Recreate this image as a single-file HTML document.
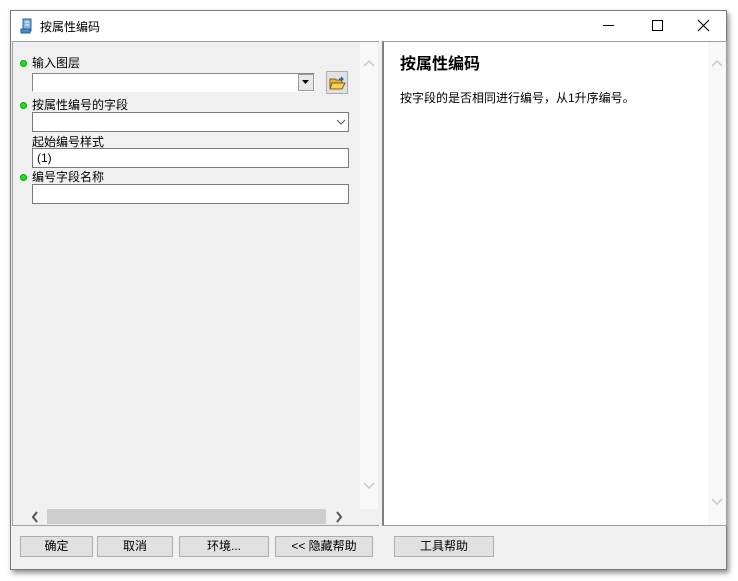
<!DOCTYPE html>
<html><head><meta charset="utf-8"><style>
*{box-sizing:border-box;margin:0;padding:0}
body{width:738px;height:581px;background:#fff;position:relative;overflow:hidden;font-family:"Liberation Sans","Noto Sans CJK SC",sans-serif;font-size:12px;color:#000}
.a{position:absolute}
.win{left:10px;top:10px;width:717px;height:560px;border:1px solid #7a7a7a;background:#f0f0f0;box-shadow:2px 3px 5px rgba(0,0,0,.45)}
.tb{left:0;top:0;width:715px;height:30px;background:#fff}
.inp{background:#fff;border:1px solid #7a7a7a}
.dot{width:7px;height:7px;border-radius:50%;background:#22dd22;border:1px solid #0a0}
.btn{height:21px;border:1px solid #adadad;background:#e1e1e1;text-align:center;line-height:19px;font-size:12px}
</style></head><body>
<div class="a win">
 <div class="a tb">
  <svg class="a" style="left:8px;top:6px" width="16" height="18" viewBox="0 0 16 18"><path d="M4 2h8v12H4z" fill="#7fb4e6" stroke="#2a5d9a"/><path d="M2 12h9v4H2z" fill="#4d8ccc" stroke="#2a5d9a"/><path d="M6 5h4M6 8h4" stroke="#fff"/></svg>
  <div class="a" style="left:29px;top:7px;font-size:12px">按属性编码</div>
  <div class="a" style="left:592px;top:14px;width:11px;height:1px;background:#000"></div>
  <div class="a" style="left:641px;top:9px;width:11px;height:11px;border:1px solid #000"></div>
  <svg class="a" style="left:686px;top:8px" width="13" height="13"><path d="M1 1L12 12M12 1L1 12" stroke="#000" stroke-width="1.1"/></svg>
 </div>
 <div class="a" style="left:1px;top:30px;width:367px;height:485px;border:1px solid #a0a0a0;border-right:none;background:#f0f0f0"></div>
 <div class="a" style="left:349px;top:31px;width:18px;height:467px;background:#f8f8f8"></div>
 <svg class="a" style="left:352px;top:48px" width="12" height="8"><path d="M1 7L6 2L11 7" stroke="#c8c8c8" fill="none" stroke-width="1.5"/></svg>
 <svg class="a" style="left:352px;top:471px" width="12" height="8"><path d="M1 1L6 6L11 1" stroke="#c8c8c8" fill="none" stroke-width="1.5"/></svg>
 <div class="a" style="left:36px;top:498px;width:279px;height:15px;background:#cdcdcd"></div>
 <svg class="a" style="left:20px;top:500px" width="8" height="12"><path d="M6 1L2 6L6 11" stroke="#555" fill="none" stroke-width="2"/></svg>
 <svg class="a" style="left:324px;top:500px" width="8" height="12"><path d="M2 1L6 6L2 11" stroke="#555" fill="none" stroke-width="2"/></svg>

 <div class="a dot" style="left:9px;top:49px"></div>
 <div class="a" style="left:21px;top:43px">输入图层</div>
 <div class="a inp" style="left:21px;top:62px;width:283px;height:19px;border-color:#888 #fff #fff #888"></div>
 <div class="a" style="left:287px;top:63px;width:16px;height:17px;background:#e8e8e8;border:1px solid #999"></div>
 <svg class="a" style="left:291px;top:69px" width="8" height="5"><path d="M0 0h7L3.5 4z" fill="#000"/></svg>
 <div class="a" style="left:315px;top:60px;width:22px;height:23px;border:1px solid #adadad;background:#e1e1e1"></div>
 <svg class="a" style="left:318px;top:64px" width="17" height="15"><path d="M1 4h5l1 1h6v9H1z" fill="#e6b838" stroke="#806010"/><path d="M3 8h13l-3 6H1z" fill="#f5d060" stroke="#806010"/><path d="M10 4h4M12 2l2 2-2 2" stroke="#2b62b5" fill="none" stroke-width="1.3"/></svg>

 <div class="a dot" style="left:9px;top:91px"></div>
 <div class="a" style="left:21px;top:85px">按属性编号的字段</div>
 <div class="a inp" style="left:21px;top:101px;width:317px;height:20px"></div>
 <svg class="a" style="left:325px;top:108px" width="10" height="6"><path d="M1 1L5 5L9 1" stroke="#555" fill="none"/></svg>
 <div class="a" style="left:21px;top:122px">起始编号样式</div>
 <div class="a inp" style="left:21px;top:137px;width:317px;height:20px;padding:2px 4px">(1)</div>
 <div class="a dot" style="left:9px;top:163px"></div>
 <div class="a" style="left:21px;top:157px">编号字段名称</div>
 <div class="a inp" style="left:21px;top:173px;width:317px;height:20px"></div>

 <div class="a" style="left:371px;top:30px;width:345px;height:485px;border:1px solid #a0a0a0;border-left:2px solid #808080;background:#fff"></div>
 <div class="a" style="left:697px;top:31px;width:18px;height:483px;background:#f8f8f8"></div>
 <svg class="a" style="left:700px;top:48px" width="12" height="8"><path d="M1 7L6 2L11 7" stroke="#c8c8c8" fill="none" stroke-width="1.5"/></svg>
 <svg class="a" style="left:700px;top:487px" width="12" height="8"><path d="M1 1L6 6L11 1" stroke="#c8c8c8" fill="none" stroke-width="1.5"/></svg>
 <div class="a" style="left:389px;top:39px;font-size:16px;font-weight:bold">按属性编码</div>
 <div class="a" style="left:389px;top:78px;font-size:12px">按字段的是否相同进行编号，从1升序编号。</div>

 <div class="a btn" style="left:9px;top:525px;width:73px">确定</div>
 <div class="a btn" style="left:86px;top:525px;width:76px">取消</div>
 <div class="a btn" style="left:168px;top:525px;width:90px">环境...</div>
 <div class="a btn" style="left:264px;top:525px;width:98px">&lt;&lt; 隐藏帮助</div>
 <div class="a btn" style="left:383px;top:525px;width:100px">工具帮助</div>
</div>
</body></html>
